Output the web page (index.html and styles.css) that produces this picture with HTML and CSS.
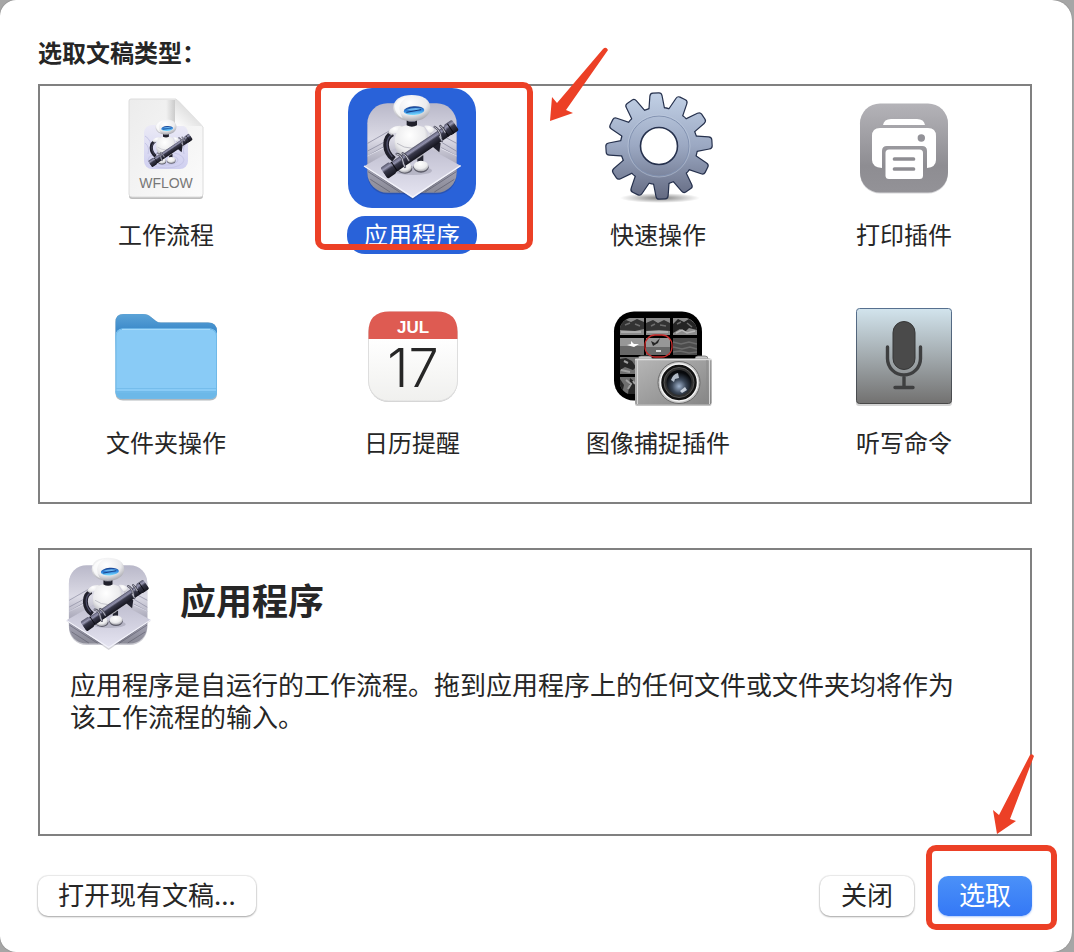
FILE: index.html
```html
<!DOCTYPE html>
<html lang="zh-CN">
<head>
    <meta charset="UTF-8">
    <title>选取文稿类型</title>
    <link rel="stylesheet" href="styles.css">
</head>
<body>
    <!-- Shared drawings -->
    <svg class="defs" width="0" height="0" aria-hidden="true">
        <defs>
            <linearGradient id="wall" x1="0" y1="0" x2="0" y2="1">
                <stop offset="0" stop-color="#b9b8c9"/>
                <stop offset=".4" stop-color="#dcdbe6"/>
                <stop offset=".7" stop-color="#a6a5b6"/>
                <stop offset="1" stop-color="#8a8a96"/>
            </linearGradient>
            <linearGradient id="floor" x1="0" y1="0" x2="0" y2="1">
                <stop offset="0" stop-color="#b9b8ca"/>
                <stop offset="1" stop-color="#e6e5f2"/>
            </linearGradient>
            <radialGradient id="shell" cx=".45" cy=".3" r=".75">
                <stop offset="0" stop-color="#ffffff"/>
                <stop offset=".6" stop-color="#ebebed"/>
                <stop offset="1" stop-color="#9b9ba3"/>
            </radialGradient>
            <linearGradient id="visor" x1="0" y1="0" x2="0" y2="1">
                <stop offset="0" stop-color="#173d8c"/>
                <stop offset=".5" stop-color="#2f86e0"/>
                <stop offset="1" stop-color="#7fe0ff"/>
            </linearGradient>
            <linearGradient id="tube" x1="0" y1="0" x2="0" y2="1">
                <stop offset="0" stop-color="#55556a"/>
                <stop offset=".25" stop-color="#9a9ab4"/>
                <stop offset=".45" stop-color="#38384a"/>
                <stop offset="1" stop-color="#15151e"/>
            </linearGradient>

            <g id="robot">
                <!-- arms -->
                <path d="M158 160 C132 172 130 214 162 238" fill="none" stroke="#20202c" stroke-width="17"/>
                <path d="M153 166 C137 180 136 208 157 230" fill="none" stroke="#50506a" stroke-width="4"/>
                <path d="M280 180 L302 190 L298 217 L278 200z" fill="#20202c"/>
                <path d="M145 160 C146 146 166 135 188 138 L176 160 Q160 156 156 167z" fill="url(#shell)"/>
                <path d="M252 137 Q274 134 284 150 L272 164z" fill="url(#shell)"/>
                <!-- legs and feet -->
                <rect x="187" y="226" width="19" height="26" fill="#242430"/>
                <rect x="232" y="226" width="18" height="26" fill="#242430"/>
                <ellipse cx="195" cy="266" rx="22" ry="15" fill="#5c5c69"/>
                <ellipse cx="194" cy="262" rx="21" ry="16" fill="url(#shell)"/>
                <ellipse cx="243" cy="262" rx="23" ry="16" fill="#5c5c69"/>
                <ellipse cx="243" cy="258" rx="22" ry="16" fill="url(#shell)"/>
                <!-- body -->
                <path d="M178 142 Q216 126 253 142 Q270 168 262 200 Q248 240 216 240 Q178 238 166 205 Q158 172 178 142z" fill="url(#shell)"/>
                <path d="M171 190 Q214 220 261 188" fill="none" stroke="#bebec6" stroke-width="3"/>
                <path d="M200 118h31v18q-15 8-31 0z" fill="#20202b"/>
                <path d="M205 124h21" stroke="#77778c" stroke-width="3"/>
                <!-- head -->
                <path d="M160 84 C160 58 184 45 215 45 C247 45 271 58 271 84 C271 107 247 124 215 124 C184 124 160 107 160 84z" fill="url(#shell)"/>
                <path d="M164 77 Q173 55 202 50 Q180 64 178 83 Q178 100 188 115 Q164 103 164 77z" fill="#ffffff" opacity=".7"/>
                <ellipse cx="222" cy="92" rx="31" ry="13" fill="url(#visor)" transform="rotate(-4 222 92)"/>
                <path d="M199 90 Q220 80 246 86 L232 92z" fill="#8bd6ff" opacity=".7"/>
                <path d="M199 97 L243 89" stroke="#14377c" stroke-width="3"/>
                <!-- long tube carried across the body -->
                <g transform="rotate(-34 239 208)">
                    <rect x="111" y="192" width="256" height="33" rx="5" fill="url(#tube)"/>
                    <rect x="110" y="188" width="32" height="40" rx="5" fill="url(#tube)"/>
                    <rect x="339" y="188" width="30" height="38" rx="5" fill="url(#tube)"/>
                    <path d="M147 192v32M333 192v32M351 191v34" stroke="#0c0c12" stroke-width="3"/>
                    <path d="M151 198h174" stroke="#8484a0" stroke-width="4"/>
                </g>
                <!-- fingers -->
                <g fill="none" stroke="#4c4c5b" stroke-width="7" stroke-linecap="round">
                    <path d="M170 222 Q180 222 186 235 L190 248M188 220 Q200 225 206 241M190 250l5 11M284 141 Q295 146 300 160L303 174M301 138 Q309 144 315 157M299 170l7 12"/>
                </g>
                <g fill="none" stroke="#c4c4cf" stroke-width="3" stroke-linecap="round">
                    <path d="M170 222 Q180 222 186 235 L190 248M188 220 Q200 225 206 241M190 250l5 11M284 141 Q295 146 300 160L303 174M301 138 Q309 144 315 157M299 170l7 12"/>
                </g>
            </g>

            <g id="automator">
                <rect x="82" y="73" width="268" height="270" rx="60" fill="#282842" opacity=".25"/>
                <rect x="82" y="70" width="268" height="268" rx="60" fill="url(#wall)"/>
                <g fill="none" stroke="#85859a" stroke-width="3" opacity=".7">
                    <path d="M83 190 L151 151M83 213 L145 180M83 228 L144 193M350 190 L290 158M350 214 L305 187M350 228 L304 203"/>
                    <path d="M84 275 L180 337M91 298 L150 336M349 275 L254 337M343 298 L283 336" stroke="#5e5e6d"/>
                </g>
                <path d="M83 228 L148 195M350 228 L304 206" stroke="#f2f2fa" stroke-width="2"/>
                <path d="M218 360 L72 260 L216 178 L362 260z" fill="#29293a" opacity=".2"/>
                <path d="M218 355 L72 259 L216 176 L362 257z" fill="url(#floor)"/>
                <path d="M72 258 L218 351 L362 257" fill="none" stroke="#f4f4fb" stroke-width="4"/>
                <ellipse cx="219" cy="272" rx="57" ry="13" fill="#45455a" opacity=".2"/>
                <use href="#robot"/>
            </g>

            <path id="tooth" d="M-7.500 -35 L-5.500 -50 Q-5.200 -52.500 -3 -52.500 L3 -52.500 Q5.200 -52.500 5.500 -50 L7.500 -35z"/>
            <g id="gear" transform="translate(65 58) rotate(-3.500)">
                <circle r="38"/>
                <use href="#tooth"/>
                <use href="#tooth" transform="rotate(30)"/>
                <use href="#tooth" transform="rotate(60)"/>
                <use href="#tooth" transform="rotate(90)"/>
                <use href="#tooth" transform="rotate(120)"/>
                <use href="#tooth" transform="rotate(150)"/>
                <use href="#tooth" transform="rotate(180)"/>
                <use href="#tooth" transform="rotate(210)"/>
                <use href="#tooth" transform="rotate(240)"/>
                <use href="#tooth" transform="rotate(270)"/>
                <use href="#tooth" transform="rotate(300)"/>
                <use href="#tooth" transform="rotate(330)"/>
            </g>
        </defs>
    </svg>

    <main class="dialog">
        <h1 class="dialog-title">选取文稿类型：</h1>

        <!-- Document types -->
        <div class="type-list">
            <button type="button" class="type">
                <svg class="type-icon" viewBox="0 0 128 120" aria-hidden="true">
                    <defs>
                        <linearGradient id="page" x1="0" y1="0" x2="1" y2="1">
                            <stop offset="0" stop-color="#ececec"/>
                            <stop offset="1" stop-color="#fbfbfb"/>
                        </linearGradient>
                        <linearGradient id="fold" x1="0" y1="1" x2=".6" y2=".3">
                            <stop offset="0" stop-color="#ffffff"/>
                            <stop offset="1" stop-color="#dadada"/>
                        </linearGradient>
                        <linearGradient id="foldShade" x1="0" y1="0" x2="1" y2="0">
                            <stop offset="0" stop-color="#000" stop-opacity="0"/>
                            <stop offset="1" stop-color="#000" stop-opacity=".16"/>
                        </linearGradient>
                        <linearGradient id="tile" x1="0" y1="0" x2="0" y2="1">
                            <stop offset="0" stop-color="#ebeaf6"/>
                            <stop offset="1" stop-color="#cfcff0"/>
                        </linearGradient>
                    </defs>
                    <path d="M29 12h45l27 27v69q0 3-3 3H30q-3 0-3-3V14q0-2 2-2z" fill="#bdbdbd"/>
                    <path d="M29 11h45l27 28v67q0 3-3 3H30q-3 0-3-3V13q0-2 2-2z" fill="url(#page)" stroke="#dcdcdc"/>
                    <path d="M64 12h9v27h-9z" fill="url(#foldShade)"/>
                    <rect x="42" y="37" width="44" height="44" rx="8" fill="url(#tile)"/>
                    <g fill="none" stroke="#c6c6e6">
                        <ellipse cx="64" cy="72" rx="12" ry="5"/>
                        <ellipse cx="64" cy="72" rx="18" ry="8"/>
                        <path d="M43 48q7 4 6 14M43 55q5 4 3 11M85 48q-7 4-6 14M85 55q-5 4-3 11"/>
                    </g>
                    <path d="M73 11q2 0 4 2l22 23q2 2 2 3q-1-1-4-1H75q-2 0-2-2z" fill="url(#fold)"/>
                    <use href="#robot" transform="translate(23 23) scale(.19)"/>
                    <text x="64" y="100" class="ext">WFLOW</text>
                </svg>
                <span class="type-name">工作流程</span>
            </button>

            <div class="type-slot">
                <button type="button" class="type selected" aria-pressed="true">
                    <svg class="type-icon" viewBox="24 24 384 360" aria-hidden="true"><use href="#automator"/></svg>
                    <span class="type-name">应用程序</span>
                </button>
                <span class="mark mark-type"></span>
                <svg class="arrow arrow-type" viewBox="0 0 60 76" aria-hidden="true">
                    <path d="M1 75 L3 51 L8 57 L54 3 Q57 0 59 4 L17 64 L24 67z"/>
                </svg>
            </div>

            <button type="button" class="type">
                <svg class="type-icon" viewBox="0 0 128 120" aria-hidden="true">
                    <defs>
                        <linearGradient id="steel" x1="0" y1="0" x2="0" y2="1">
                            <stop offset="0" stop-color="#c3d2e7"/>
                            <stop offset=".5" stop-color="#9ba8c2"/>
                            <stop offset="1" stop-color="#62687f"/>
                        </linearGradient>
                        <radialGradient id="gearShadow">
                            <stop offset="0" stop-color="#000" stop-opacity=".5"/>
                            <stop offset="1" stop-color="#000" stop-opacity="0"/>
                        </radialGradient>
                        <mask id="gearMask" maskUnits="userSpaceOnUse" x="0" y="0" width="128" height="120">
                            <use href="#gear" fill="#fff"/>
                        </mask>
                    </defs>
                    <ellipse cx="66" cy="110" rx="40" ry="5" fill="url(#gearShadow)"/>
                    <use href="#gear" fill="#26314d" stroke="#26314d" stroke-width="2.400" stroke-linejoin="round"/>
                    <rect x="8" y="3" width="114" height="110" fill="url(#steel)" mask="url(#gearMask)"/>
                    <circle cx="65" cy="58" r="30" fill="none" stroke="#8191b0"/>
                    <circle cx="65" cy="58" r="31" fill="none" stroke="#c4cfe2" opacity=".5"/>
                    <circle cx="65" cy="58" r="18.500" fill="#fff" stroke="#26314d" stroke-width="1.600"/>
                </svg>
                <span class="type-name">快速操作</span>
            </button>

            <button type="button" class="type">
                <svg class="type-icon" viewBox="0 0 128 120" aria-hidden="true">
                    <defs>
                        <linearGradient id="printer" x1="0" y1="0" x2="0" y2="1">
                            <stop offset="0" stop-color="#b4b3b8"/>
                            <stop offset=".7" stop-color="#8e8d92"/>
                            <stop offset="1" stop-color="#939297"/>
                        </linearGradient>
                    </defs>
                    <rect x="20" y="16.500" width="88" height="89" rx="20" fill="#d5d5d8"/>
                    <rect x="20" y="15.500" width="88" height="89" rx="20" fill="url(#printer)"/>
                    <path d="M43 37q1-6 8-6h26q7 0 8 6z" fill="#fff"/>
                    <path d="M40 40h48q8 0 8 8v24q0 7-9 8V63q0-5-5-5H47q-5 0-5 5v17q-10-1-10-8V48q0-8 8-8z" fill="#fff"/>
                    <circle cx="81.300" cy="50" r="3.700" fill="#939298"/>
                    <rect x="45.500" y="61.500" width="37.500" height="29.500" rx="3.500" fill="#fff"/>
                    <path d="M54.500 71h19M54.500 81h19" stroke="#8e8d92" stroke-width="3.700" stroke-linecap="round"/>
                </svg>
                <span class="type-name">打印插件</span>
            </button>

            <button type="button" class="type">
                <svg class="type-icon" viewBox="0 0 128 120" aria-hidden="true">
                    <defs>
                        <linearGradient id="tab" x1="0" y1="0" x2="0" y2="1">
                            <stop offset="0" stop-color="#5ba3d7"/>
                            <stop offset=".35" stop-color="#3f8ccb"/>
                        </linearGradient>
                    </defs>
                    <path d="M13.500 98V26q0-8 8-8H41q5 0 8 3l5 4q2 1.500 5 1.500h47q9 0 9 9V98q0 6-7 6.500H21q-7-.5-7.500-6.500z" fill="#b3b9bd"/>
                    <path d="M13.500 40V26q0-8 8-8H41q5 0 8 3l5 4q2 1.500 5 1.500h47q9 0 9 9V60h-101z" fill="url(#tab)"/>
                    <rect x="13.500" y="32.500" width="101.500" height="70.500" rx="7" fill="#89cbf6"/>
                    <path d="M13.500 95h101.500v1q0 7-7 7H20.500q-6.500 0-7-7z" fill="#6cb8e8"/>
                    <path d="M14 92.500h100M14 96h100" stroke="#75bdec"/>
                    <rect x="14" y="33" width="100.500" height="69.500" rx="7" fill="none" stroke="#70b9e8"/>
                    <path d="M20 33.500h88" stroke="#a4dafc"/>
                </svg>
                <span class="type-name">文件夹操作</span>
            </button>

            <button type="button" class="type">
                <svg class="type-icon" viewBox="0 0 128 120" aria-hidden="true">
                    <defs>
                        <linearGradient id="sheet" x1="0" y1="0" x2="0" y2="1">
                            <stop offset=".3" stop-color="#ffffff"/>
                            <stop offset="1" stop-color="#f0f0ee"/>
                        </linearGradient>
                    </defs>
                    <rect x="20.500" y="17" width="89" height="89" rx="20" fill="#cfcfcf"/>
                    <rect x="20.500" y="16" width="89" height="89" rx="20" fill="url(#sheet)" stroke="#dedede"/>
                    <path d="M20.500 43V36q0-20.500 21-20.500h47q21 0 21 20.500v7z" fill="#de5b52"/>
                    <text x="65" y="37" class="month">JUL</text>
                    <text x="65" y="91" class="day">17</text>
                </svg>
                <span class="type-name">日历提醒</span>
            </button>

            <button type="button" class="type">
                <svg class="type-icon" viewBox="0 0 128 120" aria-hidden="true">
                    <defs>
                        <clipPath id="photos"><rect x="25.500" y="21.500" width="77.500" height="77.500" rx="14"/></clipPath>
                        <linearGradient id="camera" x1="0" y1="0" x2="1" y2="1">
                            <stop offset="0" stop-color="#b7b7b7"/>
                            <stop offset="1" stop-color="#858585"/>
                        </linearGradient>
                        <radialGradient id="lens" cx=".5" cy=".65" r=".55">
                            <stop offset="0" stop-color="#9fb2cc"/>
                            <stop offset=".5" stop-color="#3a4657"/>
                            <stop offset="1" stop-color="#07090c"/>
                        </radialGradient>
                    </defs>
                    <rect x="20" y="15.500" width="88" height="89" rx="20" fill="#000"/>
                    <g clip-path="url(#photos)">
                        <path d="M26 22h24v17H26zM52 22h24v17H52zM79 22h24v17H79z" fill="#8b8b8b"/>
                        <path d="M26 42h24v17H26zM52 42h24v17H52z" fill="#979797"/>
                        <path d="M79 42h24v17H79z" fill="#4c4c4c"/>
                        <path d="M26 61h24v17H26zM26 81h24v17H26z" fill="#6f6f6f"/>
                        <!-- banks, trees and water -->
                        <path d="M26 26l6-2 5 2 6-3 7 3v7l-9 2-15-1zM52 27l7-3 5 3 6-3 6 3v8l-11-1-13 1z" fill="#333"/>
                        <path d="M79 28l5-5 6 3 5-3 8 6v5l-8-2-4 4-5-3-7 4z" fill="#242424"/>
                        <path d="M27 36h20M53 36h21M82 37l6-3 5 3 8-2" stroke="#b9b9b9" stroke-width="1.500" fill="none"/>
                        <path d="M83 28l4-2M93 27l5 4M31 29l5-2M41 28l5 2M57 30l4-2M66 29l6 1" stroke="#6d6d6d" stroke-width="1.500"/>
                        <path d="M26 50h24v9H26zM52 51h24v8H52z" fill="#686868"/>
                        <path d="M79 46l8 2 8-2 8 2M79 51l9 2 8-2 7 2M79 56l7-1 9 2 8-1" fill="none" stroke="#6c6c6c" stroke-width="1.500"/>
                        <path d="M33 49l4-1v-3l3 3h5l-5 3z" fill="#fff"/>
                        <path d="M57 45l4 2 5-5-2 5-5 3z" fill="#242424"/>
                        <path d="M62 55h5" stroke="#fff" stroke-width="1.500"/>
                        <path d="M26 63l6-1 6 3 4 6-3 3-8-3-5 3zM26 83l4 6-2 9H26zM36 82l6 5v11h-8z" fill="#262626"/>
                        <path d="M30 65l4 2M27 74l9 2M32 84l5 4-3 5M39 85l2 3" stroke="#a0a0a0" stroke-width="2" fill="none"/>
                    </g>
                    <rect x="51" y="39" width="27" height="22" rx="10" fill="none" stroke="#c92c2c" stroke-width="1.300"/>
                    <rect x="41" y="63" width="76.500" height="47" rx="2" fill="#c4c4c4"/>
                    <path d="M44 63q0-3 3-3h8q3 0 3 3zM101 63q0-3 3-3h7q3 0 3 3z" fill="#c5c5c5" stroke="#747474" stroke-width=".8"/>
                    <rect x="41" y="62.500" width="76.500" height="46" rx="2" fill="url(#camera)"/>
                    <path d="M41 63.500h76.500" stroke="#dedede" stroke-width="1.500"/>
                    <path d="M43.500 64v44M115.500 64v44" stroke="#d6d6d6" stroke-width="1"/>
                    <path d="M113 64v44" stroke="#8a8a8a" stroke-width="1"/>
                    <circle cx="85" cy="86.500" r="21" fill="#c8c8c8" stroke="#696969"/>
                    <circle cx="85" cy="86.500" r="18.500" fill="#111" stroke="#f5f5f5" stroke-width="1.500"/>
                    <circle cx="85" cy="86.500" r="15" fill="#303030" stroke="#555"/>
                    <circle cx="85" cy="86.500" r="12.500" fill="url(#lens)"/>
                    <path d="M77 84q2-6 7-7l1 5-4 1-1 3z" fill="#d4deeb" opacity=".8"/>
                    <path d="M86 95l5-4 2 3-5 3z" fill="#e6eef8" opacity=".8"/>
                </svg>
                <span class="type-name">图像捕捉插件</span>
            </button>

            <button type="button" class="type">
                <svg class="type-icon" viewBox="0 0 128 120" aria-hidden="true">
                    <defs>
                        <linearGradient id="plate" x1="0" y1="0" x2="0" y2="1">
                            <stop offset="0" stop-color="#d2e4ed"/>
                            <stop offset=".5" stop-color="#a3abaf"/>
                            <stop offset="1" stop-color="#727170"/>
                        </linearGradient>
                        <linearGradient id="plateEdge" x1="0" y1="0" x2="0" y2="1">
                            <stop offset="0" stop-color="#56708f"/>
                            <stop offset="1" stop-color="#484848"/>
                        </linearGradient>
                    </defs>
                    <rect x="16" y="14" width="96" height="96" rx="3" fill="#d4d4d4"/>
                    <rect x="16.500" y="12.500" width="95" height="95" rx="3" fill="url(#plate)" stroke="url(#plateEdge)"/>
                    <rect x="53" y="25.500" width="22" height="48" rx="11" fill="#4a4a4a" stroke="#363636"/>
                    <path d="M47.500 51v11.500a16.500 16.500 0 0 0 33 0V51M64 79v12M55 91.500h18" fill="none" stroke="#3e3f40" stroke-width="3.400" stroke-linecap="round"/>
                </svg>
                <span class="type-name">听写命令</span>
            </button>
        </div>

        <!-- Description of the selected type -->
        <section class="detail">
            <div class="detail-head">
                <svg class="detail-icon" viewBox="72 36 294 330" aria-hidden="true"><use href="#automator"/></svg>
                <h2 class="detail-title">应用程序</h2>
            </div>
            <p class="detail-text">应用程序是自运行的工作流程。拖到应用程序上的任何文件或文件夹均将作为<br>该工作流程的输入。</p>
        </section>

        <div class="actions">
            <button type="button" class="btn btn-open">打开现有文稿...</button>
            <button type="button" class="btn">关闭</button>
            <div class="choose">
                <button type="button" class="btn btn-primary">选取</button>
                <span class="mark mark-choose"></span>
                <svg class="arrow arrow-choose" viewBox="0 0 42 82" aria-hidden="true">
                    <path d="M4 81 L0 57 L6 62 L37 2 Q39 0 41 3 L17 66 L23 68z"/>
                </svg>
            </div>
        </div>
    </main>
</body>
</html>
```

FILE: styles.css
```css
* {
    box-sizing: border-box;
}

body {
    margin: 0;
    background-color: #a6a6a6;
    color: #262626;
    font-family: "Noto Sans CJK SC", sans-serif;
}

button {
    font-family: inherit;
    color: inherit;
    cursor: pointer;
}

.defs {
    position: absolute;
}

.dialog {
    min-height: 100vh;
    margin-right: 2px;
    padding: 36px 40px 35px 38px;
    background-color: #fff;
    border-radius: 16px 20px 20px 16px;
    box-shadow: 0 0 1px #555;
}

.dialog-title {
    margin: 0 0 16px;
    font-size: 24px;
    line-height: 32px;
    font-weight: bold;
}

/* Document types */
.type-list {
    display: grid;
    grid-template-columns: repeat(4, 1fr);
    padding: 0 3px;
    border: 2px solid #808080;
}

.type-slot {
    position: relative;
}

.type {
    display: flex;
    flex-direction: column;
    align-items: center;
    gap: 8px;
    width: 100%;
    height: 208px;
    padding: 2px 0 0;
    border: none;
    background: none;
}

.type-icon {
    width: 128px;
    height: 120px;
    border-radius: 24px;
}

.type-name {
    padding: 0 17px 2px;
    border-radius: 18px;
    font-size: 24px;
    line-height: 36px;
    white-space: nowrap;
}

.selected .type-icon,
.selected .type-name {
    background-color: #2962d9;
}

.selected .type-name {
    color: #fff;
}

.ext,
.month {
    font-family: "Liberation Sans", Arial, sans-serif;
    text-anchor: middle;
}

.ext {
    font-size: 14px;
    fill: #777;
}

.month {
    font-size: 17px;
    font-weight: bold;
    fill: #fff;
}

.day {
    font-family: Inter, sans-serif;
    font-size: 54px;
    font-weight: 300;
    text-anchor: middle;
    fill: #262626;
}

/* Selected type */
.detail {
    min-height: 288px;
    margin-top: 44px;
    padding: 5px 26px;
    border: 2px solid #808080;
}

.detail-head {
    display: flex;
    align-items: center;
    gap: 28px;
}

.detail-icon {
    width: 86px;
    height: 97px;
}

.detail-title {
    margin: 0 0 10px;
    font-size: 36px;
    line-height: 48px;
    font-weight: bold;
}

.detail-text {
    margin: 16px 0 0;
    padding-left: 4px;
    font-size: 26px;
    line-height: 32px;
}

/* Buttons */
.actions {
    display: flex;
    gap: 24px;
    margin-top: 40px;
}

.btn {
    min-width: 94px;
    height: 40px;
    padding: 0 20px 4px;
    border: none;
    border-radius: 10px;
    background-color: #fff;
    box-shadow: 0 0 1px 1px rgba(0, 0, 0, 0.08), 0 1px 2px rgba(0, 0, 0, 0.3);
    font-size: 26px;
    line-height: 36px;
}

.btn-open {
    margin-right: auto;
}

.btn-primary {
    background: linear-gradient(#4b91f8, #3478f6);
    box-shadow: 0 1px 2px rgba(52, 120, 246, 0.4);
    color: #fff;
}

.choose {
    position: relative;
}

/* Red marks */
.mark {
    position: absolute;
    border: 6px solid #ec4026;
    border-radius: 10px;
    pointer-events: none;
}

.mark-type {
    top: -4px;
    left: 26px;
    width: 218px;
    height: 168px;
}

.mark-choose {
    top: -31px;
    left: -12px;
    width: 131px;
    height: 85px;
}

.arrow {
    position: absolute;
    fill: #ec4026;
    pointer-events: none;
}

.arrow-type {
    top: -40px;
    left: 260px;
    width: 60px;
    height: 76px;
}

.arrow-choose {
    top: -123px;
    left: 55px;
    width: 42px;
    height: 82px;
}
```
